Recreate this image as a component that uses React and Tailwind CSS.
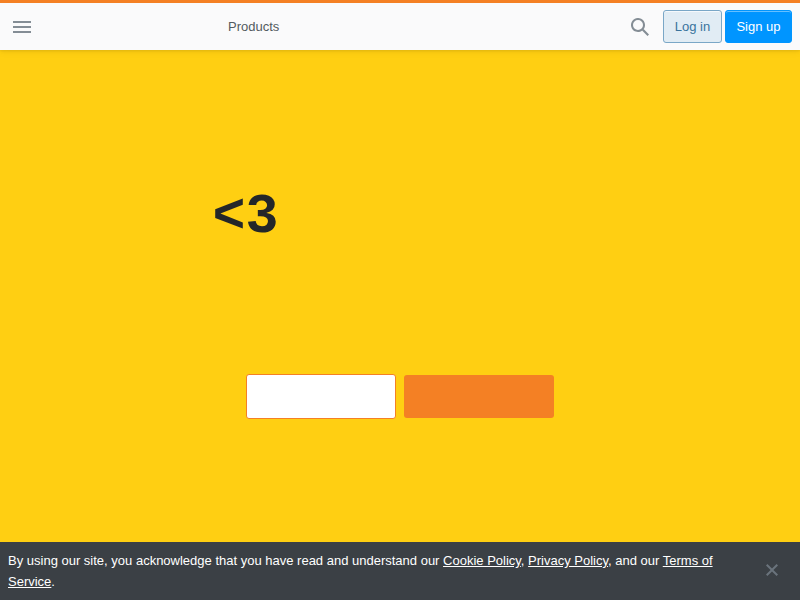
export default function App() {
  return (
    <div className="flex h-[600px] w-[800px] flex-col overflow-hidden bg-[#ffcf12] font-['Liberation_Sans',Arial,sans-serif] text-[13px]">
      <header className="z-10 flex h-[50px] shrink-0 items-center border-t-[3px] border-[#f48024] bg-[#fafafb] pr-2 shadow-[0_1px_2px_rgba(0,0,0,0.05),0_1px_4px_rgba(0,0,0,0.05),0_2px_8px_rgba(0,0,0,0.05)]">
        <button aria-label="Menu" className="ml-[13px] flex w-[18px] flex-col gap-[3px]">
          <span className="h-0.5 bg-[#848d95]" />
          <span className="h-0.5 bg-[#848d95]" />
          <span className="h-0.5 bg-[#848d95]" />
        </button>
        <a className="ml-[197px] text-[#535a60]">Products</a>
        <svg className="mr-[14px] ml-auto" width="18" height="18" viewBox="0 0 18 18" fill="#848d95">
          <path d="M18 16.5l-5.14-5.18h-.35a7 7 0 10-1.19 1.19v.35L16.5 18l1.5-1.5zM12 7A5 5 0 112 7a5 5 0 0110 0z" />
        </svg>
        <nav className="flex gap-[3px]">
          <a className="flex h-[33px] w-[59px] items-center justify-center rounded-[3px] border border-[#7aa7c7] bg-[#e1ecf4] text-[#39739d] shadow-[inset_0_1px_0_rgba(255,255,255,0.7)]">Log in</a>
          <a className="flex h-[33px] w-[67px] items-center justify-center rounded-[3px] border border-[#0095ff] bg-[#0095ff] text-white shadow-[inset_0_1px_0_rgba(255,255,255,0.4)]">Sign up</a>
        </nav>
      </header>
      <main className="flex-1">
        <h1 className="mt-[135px] ml-[212.5px] h-[66px] font-['Liberation_Mono',monospace] text-[55px] leading-[66px] font-bold text-[#242729]">&lt;3</h1>
        <div className="mt-[123px] flex items-center justify-center gap-2">
          <a className="h-[45px] w-[150px] rounded-[3px] border border-[#f48024] bg-white" />
          <a className="h-[43px] w-[150px] rounded-[3px] bg-[#f48024]" />
        </div>
      </main>
      <footer className="flex h-[58px] shrink-0 items-center bg-[#3b4045] pr-[22px] pl-2 text-white">
        <p className="w-[730px] leading-[21px]">
          By using our site, you acknowledge that you have read and understand our <a className="underline">Cookie Policy</a>, <a className="underline">Privacy Policy</a>, and our <a className="underline">Terms of Service</a>.
        </p>
        <svg className="mb-0.5 ml-auto shrink-0" width="12" height="12" viewBox="0 0 12 12" fill="#6a737c">
          <path d="M12 1.41L10.59 0 6 4.59 1.41 0 0 1.41 4.59 6 0 10.59 1.41 12 6 7.41 10.59 12 12 10.59 7.41 6z" />
        </svg>
      </footer>
    </div>
  );
}
